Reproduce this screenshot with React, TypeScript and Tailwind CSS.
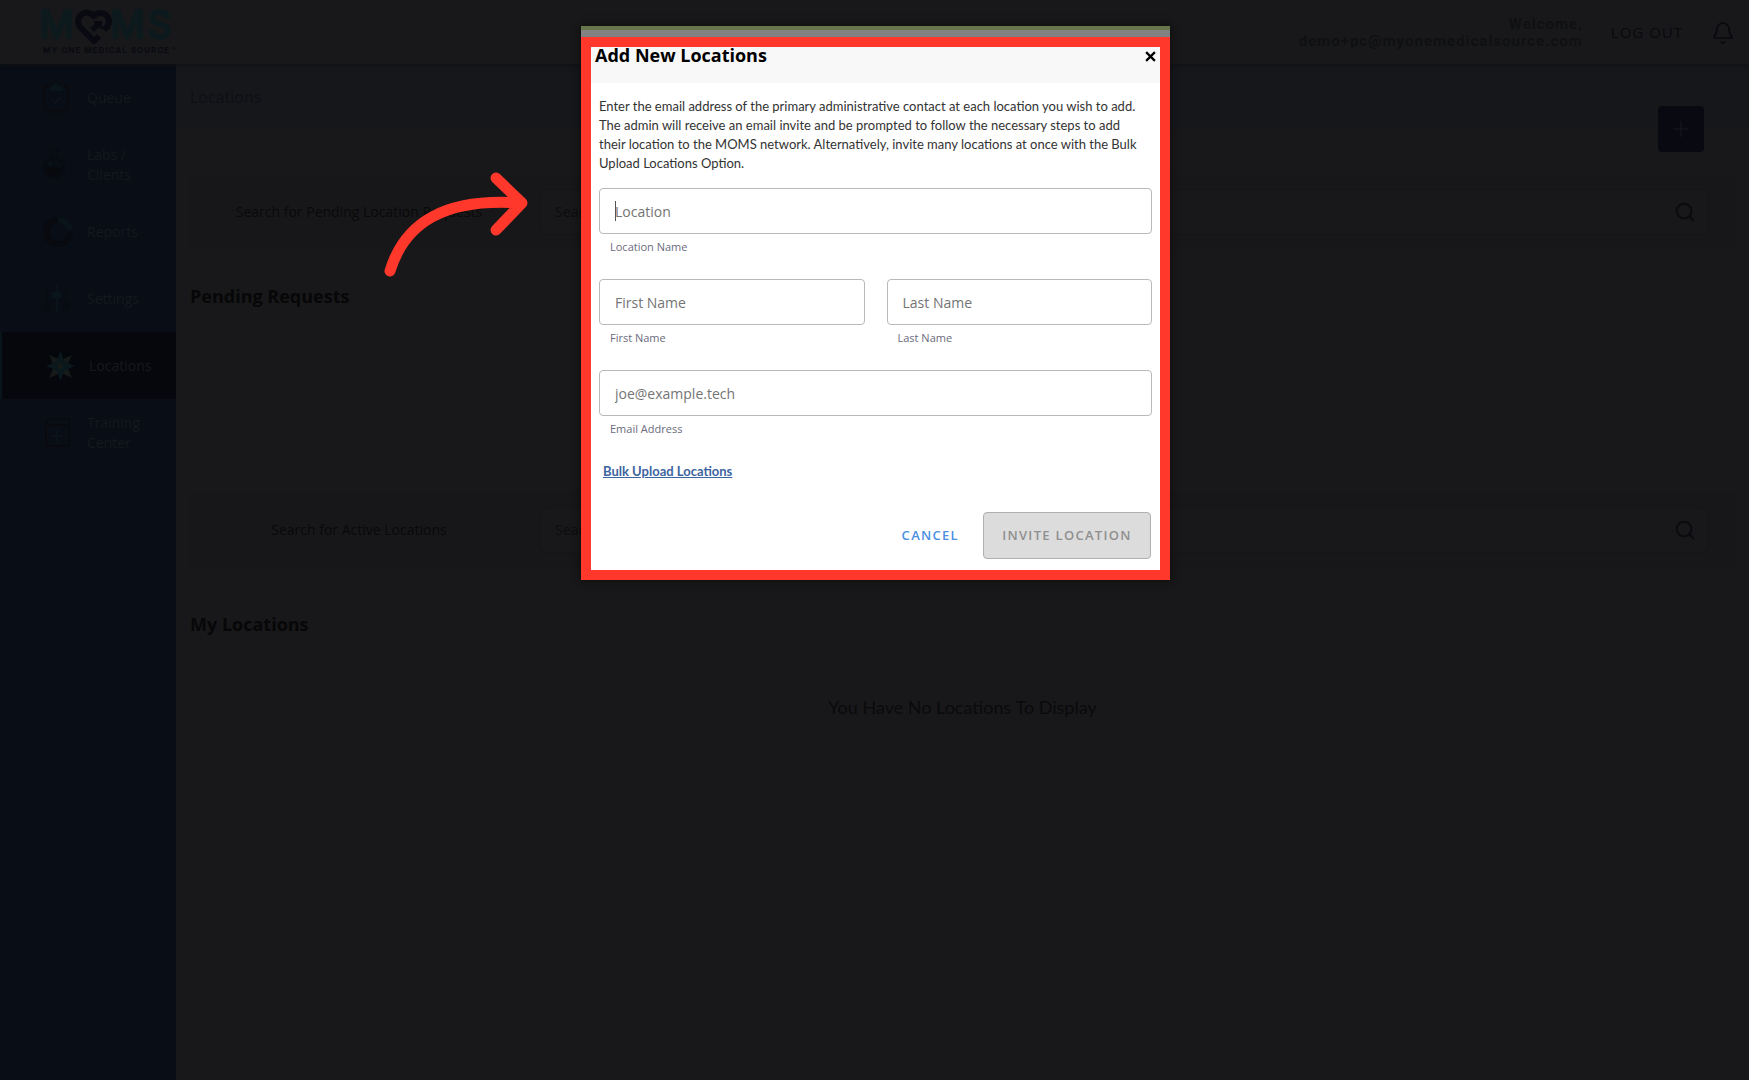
import React from 'react';
import { Bell, Plus, Search } from 'lucide-react';

const QueueIcon = () => (
  <svg viewBox="0 0 32 32" className="h-8 w-8" fill="none">
    <rect x="1.5" y="4.5" width="23" height="25" stroke="#090b10" strokeWidth="3" />
    <path d="M7 9V4h3a3.200 3.200 0 0 1 6 0h4v5z" fill="#0a151b" />
    <path d="m9 17 3 4 6-6" stroke="#0a151b" strokeWidth="2" />
  </svg>
);

const LabsIcon = () => (
  <svg viewBox="0 0 32 32" className="h-8 w-8" fill="none" stroke="#080b11" strokeWidth="2">
    <path d="M5 1h12M8 2v8M14 2v8" />
    <circle cx="11" cy="19" r="10" />
    <path d="M2 18c5-4 12 3 18 0a9 9 0 0 1-18 0z" fill="#07090d" />
    <circle cx="7" cy="15" r="1" stroke="#0a151b" />
  </svg>
);

const ReportsIcon = () => (
  <svg viewBox="0 0 32 32" className="h-8 w-8" fill="none" strokeWidth="6">
    <path d="M27 17A12 12 0 1 1 14 4" stroke="#080a0f" />
    <path d="M15 4a12 12 0 0 1 12 10" stroke="#0a131a" />
    <path d="m3 28 7-7" stroke="#090d15" strokeWidth="1" />
  </svg>
);

const SettingsIcon = () => (
  <svg viewBox="0 0 32 32" className="h-8 w-8" strokeWidth="2">
    <path d="M4 3v26M23 3v26" stroke="#080b12" />
    <path d="M14 2v28" stroke="#0b131a" />
    <path d="M0 19h8v5l-2 3H2l-2-3zM19 19h8v5l-2 3h-4l-2-3z" fill="#080b11" />
    <path d="M9 9h9v6H9z" fill="#0a141b" />
  </svg>
);

const LocationsIcon = () => (
  <svg viewBox="0 0 32 32" className="h-8 w-8">
    <path d="m4 5 12 5 11-5-5 11 5 12-11-5-12 5 5-12z" fill="#151a19" />
    <path d="m15.500 1 4 10.500L30 16l-10.500 4.500-4 10.500-4-10.500L1 16l10.500-4.500z" fill="#0a181d" />
    <circle cx="15.500" cy="16" r="3" fill="#151a19" />
  </svg>
);

const TrainingIcon = () => (
  <svg viewBox="0 0 32 32" className="h-8 w-8" fill="none" strokeWidth="2">
    <path d="M3 6a4 4 0 0 1 4-4h19v27H6a3 3 0 0 1-3-3zM3 8h23" stroke="#080a0f" />
    <path d="M14 13v12M8 19h12" stroke="#0a121a" />
  </svg>
);

const navItems = [
  { label: 'Queue', Icon: QueueIcon },
  { label: 'Labs / Clients', Icon: LabsIcon },
  { label: 'Reports', Icon: ReportsIcon },
  { label: 'Settings', Icon: SettingsIcon },
  { label: 'Locations', Icon: LocationsIcon, active: true },
  { label: 'Training Center', Icon: TrainingIcon },
];

function Logo() {
  return (
    <svg
      viewBox="0 0 136 48"
      className="h-12 w-[136px] overflow-visible"
      role="img"
      aria-label="MOMS My One Medical Source"
      fontFamily="Inter, sans-serif"
    >
      <g
        fill="#0d1a1d"
        stroke="#0d1a1d"
        strokeWidth="2"
        strokeLinejoin="round"
        fontSize="38"
        fontWeight="500"
      >
        <text x="-3" y="30">M</text>
        <text x="68" y="30">M</text>
        <text x="105" y="30">S</text>
      </g>
      <path
        d="M57 28 52 33 38 19a8 8 0 0 1 14-11 8 8 0 0 1 13 11l-3 3"
        fill="none"
        stroke="#090a11"
        strokeWidth="6"
        strokeLinejoin="round"
      />
      <path d="M51 13h9v9l-3-3-5 5-4-4 5-4z" fill="#090a11" />
      <text x="1" y="45" fill="#090b11" fontSize="8" fontWeight="700" letterSpacing="1">
        MY ONE MEDICAL SOURCE
      </text>
      <circle cx="132" cy="40" r="1" fill="none" stroke="#0c0e13" />
    </svg>
  );
}

function Header() {
  return (
    <header className="z-10 flex h-16 items-center justify-between bg-[#18181a] pr-[14px] pl-[42px] shadow-[0_1px_4px_#0f1113]">
      <Logo />
      <div className="flex items-center pt-px">
        <p className="text-right font-[Roboto,sans-serif] text-[15px] leading-[17px] font-bold tracking-[1px] text-[#0f1012]">
          Welcome,
          <br />
          demo+pc@myonemedicalsource.com
        </p>
        <button className="ml-7 text-[15px] tracking-[1px] text-[#08090d]">LOG OUT</button>
        <button aria-label="Notifications" className="ml-7 text-[#07080e]">
          <Bell className="h-6 w-6" strokeWidth={1.5} />
        </button>
      </div>
    </header>
  );
}

function Sidebar() {
  return (
    <nav className="w-44 shrink-0 bg-[#090d15]">
      {navItems.map(({ label, Icon, active }) => (
        <a
          key={label}
          href="#"
          className={`flex h-[67px] items-center gap-3 pl-[43px] text-sm leading-5 ${
            active ? 'border-l-2 border-[#09131a] bg-[#05070c] text-[#17191c]' : 'text-[#15181e]'
          }`}
        >
          <Icon />
          <span className="w-[70px]">{label}</span>
        </a>
      ))}
    </nav>
  );
}

function SearchBar({ id, label }: { id: string; label: string }) {
  return (
    <div className="mr-3 ml-[14px] flex h-[74px] items-center rounded bg-[#171719] pr-7">
      <label htmlFor={id} className="w-[350px] shrink-0 pr-3 text-center text-sm text-[#09090a]">
        {label}
      </label>
      <div className="flex h-[46px] flex-1 items-center rounded-lg border border-[#151517] bg-[#18181a] pr-3 pl-[14px]">
        <input id={id} placeholder="Search" className="min-w-0 flex-1 text-sm outline-none placeholder:text-[#0c0c0d]" />
        <Search className="h-[22px] w-[22px] text-[#0a0b0f]" strokeWidth={2} />
      </div>
    </div>
  );
}

type FieldProps = { id: string; label: string; placeholder: string; type?: string; focused?: boolean };

function Field({ id, label, placeholder, type = 'text', focused }: FieldProps) {
  return (
    <div className="relative flex min-w-0 flex-1 flex-col">
      <input
        id={id}
        type={type}
        placeholder={placeholder}
        className="h-[46px] w-full rounded border border-[#b9b9b9] px-[15px] text-sm text-black outline-none placeholder:text-[#747474]"
      />
      {focused && <span className="absolute top-[13px] left-4 h-5 w-px bg-[#555]" />}
      <label htmlFor={id} className="mt-[5px] ml-[11px] text-[11px] leading-4 text-[#6b6b7d]">
        {label}
      </label>
    </div>
  );
}

function AddLocationModal() {
  return (
    <div className="absolute inset-0 z-20 flex items-start justify-center pt-[26px] pl-[2px]">
      <div role="dialog" aria-labelledby="modal-title" className="w-[589px] shadow-[0_0_8px_#0b0b0b]">
        <div className="h-[11px] border-t-4 border-[#67764a] bg-[#828282]" />
        <div className="border-10 border-[#ff382b] bg-white">
          <div className="flex h-9 items-start justify-between bg-[#f8f8f8] px-1">
            <h2 id="modal-title" className="text-lg leading-4 font-bold text-black">
              Add New Locations
            </h2>
            <button aria-label="Close" className="mt-1 text-black">
              <svg viewBox="0 0 10 10" className="h-[11px] w-[11px]" stroke="currentColor" strokeWidth="2">
                <path d="m1 1 8 8M9 1 1 9" />
              </svg>
            </button>
          </div>
          <form className="flex flex-col px-2 pt-[14px] pb-[11px]" onSubmit={(e) => e.preventDefault()}>
            <p className="font-[Lato,sans-serif] text-[13px] leading-[19px] text-[#333]">
              Enter the email address of the primary administrative contact at each location you wish to add.
              <br />
              The admin will receive an email invite and be prompted to follow the necessary steps to add
              <br />
              their location to the MOMS network. Alternatively, invite many locations at once with the Bulk
              <br />
              Upload Locations Option.
            </p>
            <div className="mt-[15px] flex flex-col gap-6">
              <Field id="location" label="Location Name" placeholder="Location" focused />
              <div className="flex gap-[22px]">
                <Field id="first-name" label="First Name" placeholder="First Name" />
                <Field id="last-name" label="Last Name" placeholder="Last Name" />
              </div>
              <Field id="email" label="Email Address" placeholder="joe@example.tech" type="email" />
            </div>
            <a
              href="#"
              className="mt-6 ml-1 self-start font-[Lato,sans-serif] text-[13px] leading-5 font-bold text-[#3c64a0] underline"
            >
              Bulk Upload Locations
            </a>
            <div className="mt-[31px] flex items-center justify-end gap-6 pr-px text-[13px] font-semibold">
              <button type="button" className="tracking-widest text-[#4a90e2]">
                CANCEL
              </button>
              <button
                type="submit"
                disabled
                className="h-[47px] w-[168px] rounded border border-[#b0b0b0] bg-[#dcdcdc] tracking-widest text-[#8f8f8f]"
              >
                INVITE LOCATION
              </button>
            </div>
          </form>
        </div>
      </div>
      <svg
        viewBox="0 0 144 105"
        className="absolute top-[172px] left-[384px] h-[105px] w-36"
        fill="none"
        stroke="#ff382b"
        strokeWidth="11"
        strokeLinecap="round"
        strokeLinejoin="round"
      >
        <path d="M6 99C21 50 61 26 136 31M112 6l26 25-26 27" />
      </svg>
    </div>
  );
}

function App() {
  return (
    <div className="relative flex min-h-screen flex-col bg-[#18181a] font-['Open_Sans',sans-serif]">
      <Header />
      <div className="flex flex-1">
        <Sidebar />
        <main className="flex-1">
          <div className="relative h-[65px] bg-[#15171b] px-[14px] pt-[21px]">
            <h1 className="text-base leading-6 text-[#0e0f13]">Locations</h1>
            <button
              aria-label="Add location"
              className="absolute top-[42px] right-[45px] flex h-[46px] w-[46px] items-center justify-center rounded bg-[#090a11] text-[#17181d]"
            >
              <Plus className="h-[26px] w-[26px]" strokeWidth={1} />
            </button>
          </div>
          <section className="pt-[46px]">
            <SearchBar id="pending-search" label="Search for Pending Location Requests" />
            <h2 className="mt-8 ml-[14px] text-lg leading-[30px] font-bold text-[#070708]">Pending Requests</h2>
          </section>
          <section className="pt-[182px]">
            <SearchBar id="active-search" label="Search for Active Locations" />
            <h2 className="mt-[42px] ml-[14px] text-lg leading-[30px] font-bold text-[#070708]">My Locations</h2>
            <p className="mt-14 text-center font-[Lato,sans-serif] text-lg leading-6 text-[#0a0a0b]">
              You Have No Locations To Display
            </p>
          </section>
        </main>
      </div>
      <AddLocationModal />
    </div>
  );
}

export default App;
